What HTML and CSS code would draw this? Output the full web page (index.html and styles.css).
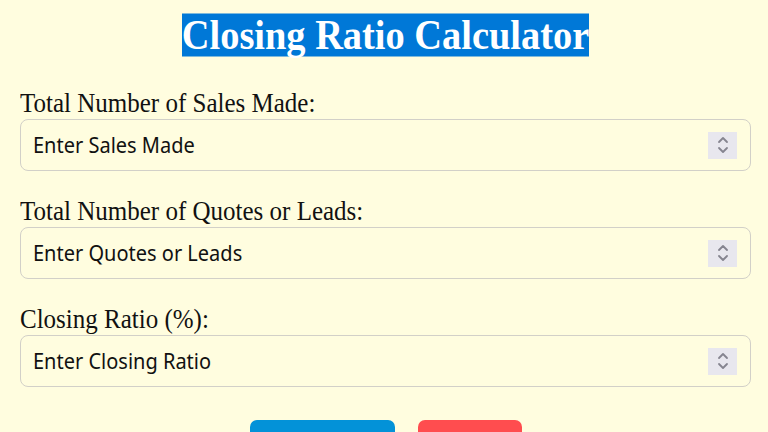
FILE: index.html
```html
<!DOCTYPE html>
<html lang="en">
<head>
<meta charset="utf-8">
<title>Closing Ratio Calculator</title>
<link rel="stylesheet" href="styles.css">
</head>
<body>
<main class="page">
  <h1 class="title"><span class="title-text">Closing Ratio Calculator</span></h1>
  <form class="form">
    <div class="field">
      <label class="label" for="sales">Total Number of Sales Made:</label>
      <div class="input-box">
        <input class="input" id="sales" type="text" placeholder="Enter Sales Made">
        <span class="spin"><svg width="12" height="20" viewBox="0 0 12 20"><path d="M2 7 L6 3 L10 7 M2 13 L6 17 L10 13" fill="none" stroke="#85848f" stroke-width="1.8" stroke-linecap="round" stroke-linejoin="round"/></svg></span>
      </div>
    </div>
    <div class="field">
      <label class="label" for="quotes">Total Number of Quotes or Leads:</label>
      <div class="input-box">
        <input class="input" id="quotes" type="text" placeholder="Enter Quotes or Leads">
        <span class="spin"><svg width="12" height="20" viewBox="0 0 12 20"><path d="M2 7 L6 3 L10 7 M2 13 L6 17 L10 13" fill="none" stroke="#85848f" stroke-width="1.8" stroke-linecap="round" stroke-linejoin="round"/></svg></span>
      </div>
    </div>
    <div class="field">
      <label class="label" for="ratio">Closing Ratio (%):</label>
      <div class="input-box">
        <input class="input" id="ratio" type="text" placeholder="Enter Closing Ratio">
        <span class="spin"><svg width="12" height="20" viewBox="0 0 12 20"><path d="M2 7 L6 3 L10 7 M2 13 L6 17 L10 13" fill="none" stroke="#85848f" stroke-width="1.8" stroke-linecap="round" stroke-linejoin="round"/></svg></span>
      </div>
    </div>
    <div class="buttons">
      <button type="button" class="btn btn-calc">Calculate</button>
      <button type="button" class="btn btn-reset">Reset</button>
    </div>
  </form>
</main>
</body>
</html>
```
FILE: styles.css
```css
html, body {
  margin: 0;
  padding: 0;
  background: #fffddf;
}
body {
  font-family: "Liberation Serif", "Times New Roman", serif;
  color: #111;
}
.page {
  padding: 15px 17px 0 20px;
}
.title {
  margin: 0;
  text-align: center;
  font-size: 38.4px;
  line-height: 40px;
  font-weight: bold;
}
.title-text {
  display: inline-block;
  background: #0078d7;
  color: #fff;
  transform: scaleY(1.075);
}
.form {
  display: flex;
  flex-direction: column;
  gap: 27px;
  margin-top: 35px;
}
.field {
  display: flex;
  flex-direction: column;
  gap: 1px;
}
.label {
  font-size: 25px;
  line-height: 28px;
  color: #111;
  transform: scaleY(1.08);
  transform-origin: 0 22px;
}
.input-box {
  display: flex;
  align-items: center;
  height: 52px;
  box-sizing: border-box;
  border: 1.5px solid #d2d0c8;
  border-radius: 8px;
  padding: 0 13px 0 12px;
}
.input {
  flex: 1;
  min-width: 0;
  border: 0;
  background: transparent;
  outline: none;
  padding: 0;
  font-family: "Noto Sans", sans-serif;
  font-size: 20px;
  color: #111;
  transform: scaleY(1.05);
}
.input::placeholder {
  color: #111;
  opacity: 1;
}
.spin {
  display: flex;
  align-items: center;
  justify-content: center;
  width: 29px;
  height: 27px;
  background: #e8e7ee;
}
.buttons {
  display: flex;
  justify-content: center;
  gap: 23px;
  margin-top: 6px;
}
.btn {
  border: 0;
  border-radius: 7px;
  color: #fff;
  font-family: "Noto Sans", sans-serif;
  font-size: 20px;
  height: 50px;
  padding: 0;
}
.btn-calc {
  width: 145px;
  background: #0392d8;
}
.btn-reset {
  width: 104px;
  background: #ff4d4f;
}
```
